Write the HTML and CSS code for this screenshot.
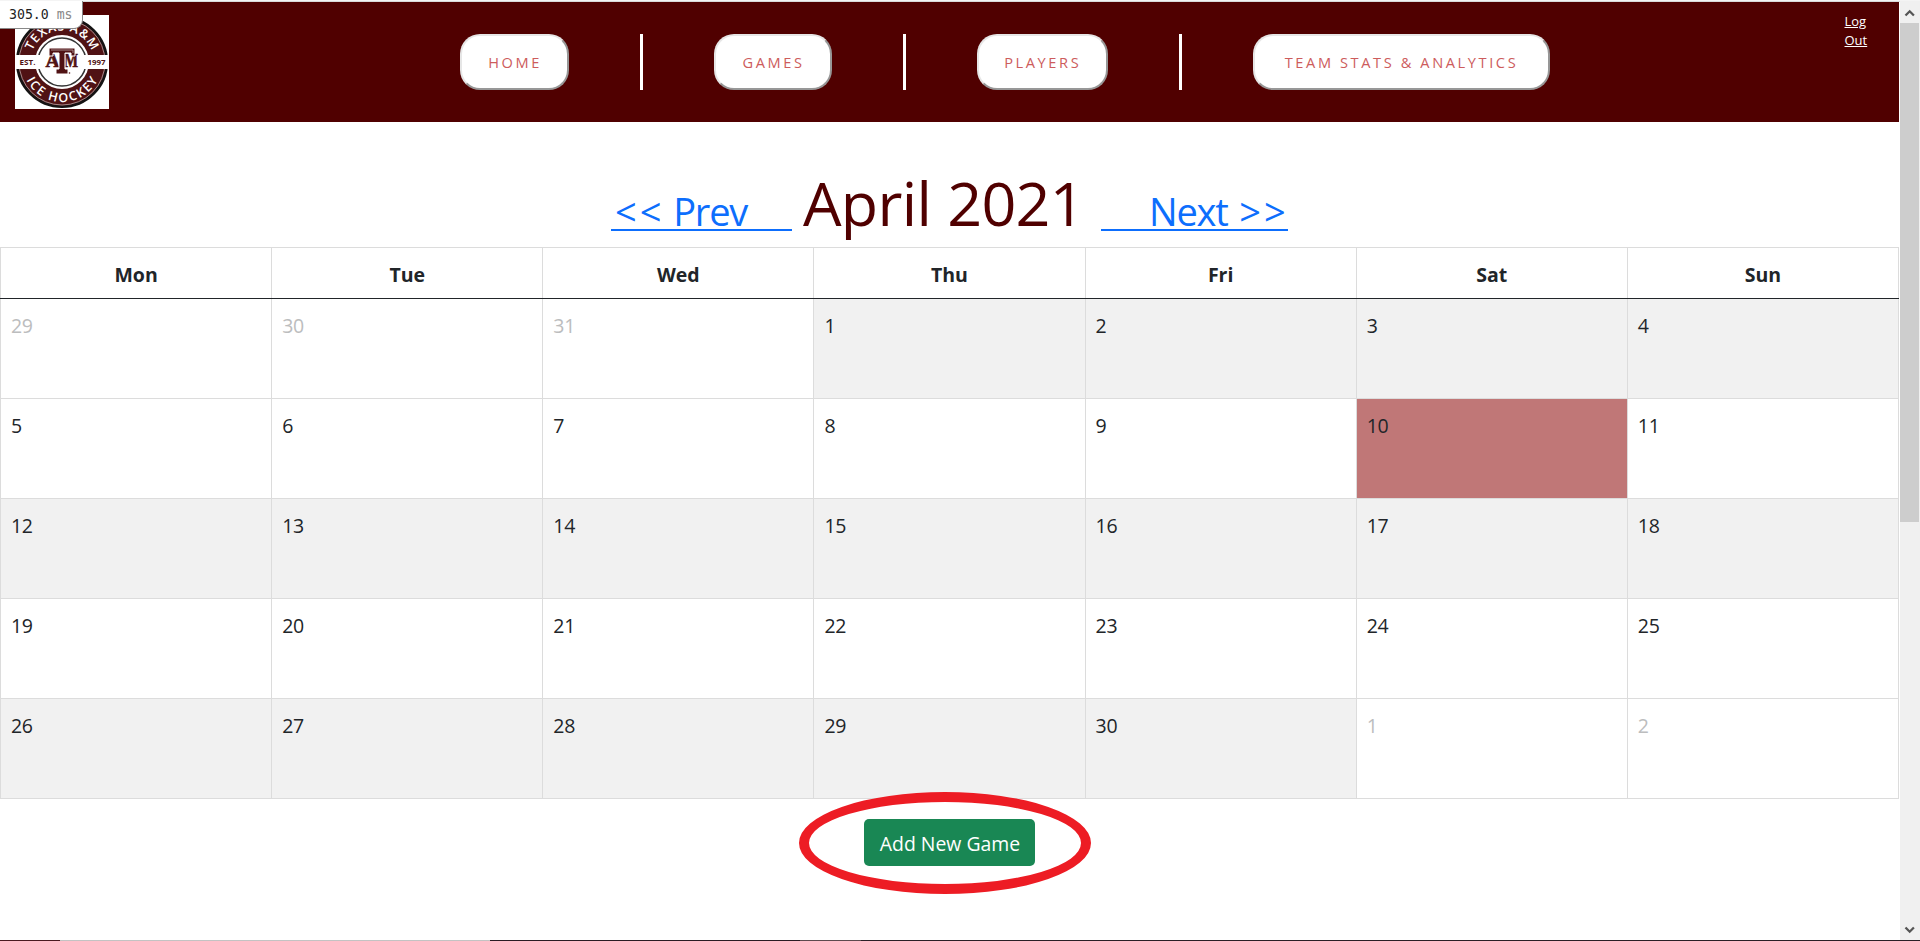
FILE: index.html
```html
<!DOCTYPE html>
<html lang="en">
<head>
<meta charset="utf-8">
<title>Games Calendar</title>
<link rel="stylesheet" href="styles.css">
</head>
<body>
<div class="window">
  <div class="page">
    <header class="navbar">
      <svg class="logo" viewBox="0 0 94 94">
        <defs>
          <path id="arc-top" d="M15.500 47a31.500 31.500 0 0 1 63 0"/>
          <path id="arc-bottom" d="M7 47a40 40 0 0 0 80 0"/>
        </defs>
        <rect width="94" height="94" fill="#fff"/>
        <circle cx="47" cy="47" r="44.8" fill="#501214" stroke="#151313" stroke-width="2.6"/>
        <circle cx="47" cy="47" r="43" fill="none" stroke="#b9a5a5" stroke-width=".8"/>
        <circle cx="47" cy="47" r="27" fill="#fff"/>
        <rect y="40" width="94" height="14" fill="#fff"/>
        <circle cx="47" cy="47" r="24" fill="#fff" stroke="#333" stroke-width="1.5"/>
        <rect x="18" y="40" width="58" height="14" fill="#fff"/>
        <text class="ring-text"><textPath href="#arc-top" startOffset="50%" text-anchor="middle" textLength="76">TEXAS A&amp;M</textPath></text>
        <text class="ring-text"><textPath href="#arc-bottom" startOffset="50%" text-anchor="middle" textLength="88">ICE HOCKEY</textPath></text>
        <text class="side-text" x="4.5" y="49.5" textLength="16" lengthAdjust="spacingAndGlyphs">EST.</text>
        <text class="side-text" x="72.5" y="49.5" textLength="18" lengthAdjust="spacingAndGlyphs">1997</text>
        <text class="mono-text" x="30.5" y="52" textLength="14" lengthAdjust="spacingAndGlyphs">A</text>
        <text class="mono-text" x="49" y="52" textLength="14" lengthAdjust="spacingAndGlyphs">M</text>
        <path d="M34 33h26v8h-4v-3h-6v16h3v5H41v-5h3V38h-6v3h-4z" fill="#501214" stroke="#fff" stroke-width="1"/>
        <path d="M36 35h22v3" fill="none" stroke="#b9a5a5" stroke-width=".8"/>
        <circle cx="54.5" cy="58" r=".8" fill="#501214"/>
      </svg>
      <nav class="menu">
        <button class="menu-btn home">HOME</button>
        <i class="divider"></i>
        <button class="menu-btn games">GAMES</button>
        <i class="divider"></i>
        <button class="menu-btn players">PLAYERS</button>
        <i class="divider"></i>
        <button class="menu-btn stats">TEAM STATS &amp; ANALYTICS</button>
      </nav>
      <a class="logout" href="#">Log<br>Out</a>
    </header>
    <div class="heading">
      <a class="prev" href="#"><span class="arrows">&lt;&lt;</span> Prev</a>
      <h1>April 2021</h1>
      <a class="next" href="#">Next <span class="arrows">&gt;&gt;</span></a>
    </div>
    <table class="calendar">
      <thead>
        <tr><th>Mon</th><th>Tue</th><th>Wed</th><th>Thu</th><th>Fri</th><th>Sat</th><th>Sun</th></tr>
      </thead>
      <tbody>
        <tr class="odd"><td class="other">29</td><td class="other">30</td><td class="other">31</td><td>1</td><td>2</td><td>3</td><td>4</td></tr>
        <tr><td>5</td><td>6</td><td>7</td><td>8</td><td>9</td><td class="today">10</td><td>11</td></tr>
        <tr class="odd"><td>12</td><td>13</td><td>14</td><td>15</td><td>16</td><td>17</td><td>18</td></tr>
        <tr><td>19</td><td>20</td><td>21</td><td>22</td><td>23</td><td>24</td><td>25</td></tr>
        <tr class="odd"><td>26</td><td>27</td><td>28</td><td>29</td><td>30</td><td class="other">1</td><td class="other">2</td></tr>
      </tbody>
    </table>
    <div class="actions">
      <button class="add-btn">Add New Game</button>
    </div>
  </div>
  <div class="scrollbar">
    <svg width="20" height="21" viewBox="0 0 20 21"><path d="M5.500 14.500l4.200-4.200 4.200 4.200" fill="none" stroke="#555" stroke-width="2.300"/></svg>
    <div class="thumb"></div>
    <svg class="down" width="20" height="21" viewBox="0 0 20 21"><path d="M5.500 8.500l4.200 4.200 4.200-4.200" fill="none" stroke="#555" stroke-width="2.300"/></svg>
  </div>
</div>
<div class="edge"><i class="e1"></i><i class="e2"></i><i class="e3"></i><i class="e4"></i><i class="e5"></i></div>
<div class="profiler">305.0 <span>ms</span></div>
<div class="marker"></div>
</body>
</html>
```

FILE: styles.css
```css
* { box-sizing: border-box; }
body {
  margin: 0;
  height: 941px;
  overflow: hidden;
  background: #fff;
  color: #212529;
  font-family: "Open Sans", "Noto Sans", sans-serif;
}
.window {
  display: flex;
  height: 940px;
  border-top: 1px solid #f4f4f4;
}
.page { width: 1900px; padding-right: 1px; border-top: 1px solid #d9d9d9; }
.navbar {
  display: flex;
  height: 120px;
  background: #500000;
  padding: 13px 0 0 15px;
}
.logo { width: 94px; height: 94px; flex: none; }
.ring-text { font: 600 12.5px "Open Sans", sans-serif; fill: #fff; }
.side-text { font: 700 6.5px "Open Sans", sans-serif; fill: #501214; }
.mono-text { font: 700 18px "Liberation Serif", serif; fill: #501214; stroke: #501214; stroke-width: .6; }
.menu { display: flex; gap: 71px; margin: 19px 0 0 351px; height: 56px; }
.menu-btn {
  height: 56px;
  padding: 0 0 0 1px;
  background: #fff;
  border: 2px solid;
  border-color: #e6e6e6 #979797 #979797 #e6e6e6;
  border-radius: 20px;
  color: #cd5c5c;
  font: 400 14.6px "Open Sans", sans-serif;
  letter-spacing: 2.600px;
  white-space: nowrap;
}
.home { width: 109px; }
.games { width: 118px; }
.players { width: 131.500px; margin-left: -.5px; }
.stats { width: 297px; margin-left: -.5px; }
.divider { width: 3px; background: #fff; }
.menu .divider, .menu-btn { flex: none; }
.logout {
  margin: -3px 0 0 295px;
  color: #fff;
  font-size: 13px;
  line-height: 19px;
}
.heading {
  display: flex;
  align-items: baseline;
  height: 125px;
  padding-left: 611px;
  white-space: pre;
}
.heading a {
  color: #0d6efd;
  font-size: 38px;
  letter-spacing: -1.200px;
  text-decoration: none;
  border-bottom: 2px solid #0d6efd;
  line-height: 36px;
}
.heading .arrows { letter-spacing: 3px; }
.prev { width: 181px; padding-left: 4px; }
.next { width: 187px; padding-left: 48px; }
.next .arrows { padding-left: 3px; }
.heading h1 {
  width: 309px;
  margin: 0;
  padding-left: 11px;
  color: #500000;
  font-weight: 400;
  font-size: 61px;
  line-height: 162px;
  letter-spacing: -.7px;
  word-spacing: 1px;
}
.calendar {
  width: 1899px;
  table-layout: fixed;
  border-collapse: collapse;
  font-size: 19.500px;
}
.calendar th {
  height: 51px;
  padding: 3px 0 0;
  border: 1px solid #dcdcdc;
  border-bottom-color: #212529;
  font-size: 19.500px;
  font-weight: 700;
}
.calendar td {
  height: 100px;
  padding: 12px 10px;
  vertical-align: top;
  border: 1px solid #dcdcdc;
  letter-spacing: -.3px;
  line-height: 30px;
}
.calendar tbody tr:first-child td { border-top-color: #212529; }
.odd td { background: #f1f1f1; }
.calendar td.other { background: #fff; color: #bcbdbe; }
.calendar td.today { background: #c07777; }
.actions { display: flex; justify-content: center; padding-top: 20px; }
.add-btn {
  width: 171px;
  height: 47px;
  padding: 2px 0 0 1px;
  border: 0;
  border-radius: 5px;
  background: #198754;
  color: #fff;
  font: 400 19.400px "Open Sans", sans-serif;
  white-space: nowrap;
}
.scrollbar {
  display: flex;
  flex-direction: column;
  width: 20px;
  background: #f0f0f0;
}
.scrollbar svg { display: block; flex: none; }
.thumb { width: 19px; height: 499px; margin-top: 1px; background: #cdcdcd; }
.scrollbar .down { margin-top: auto; }
.edge { display: flex; height: 1px; }
.e1 { width: 60px; background: #4a1a20; }
.e2 { width: 430px; background: #c3c3c3; }
.e3 { width: 310px; background: #2a1c24; }
.e4 { width: 61px; background: #5c4a4e; }
.e5 { flex: 1; background: #2a1f26; }
.profiler {
  position: absolute;
  left: 0;
  top: 1px;
  width: 83px;
  height: 28px;
  padding-left: 9px;
  border: 1px solid #888;
  border-width: 0 1px 1px 0;
  border-bottom-right-radius: 9px;
  background: #fff;
  color: #222;
  font: 13.200px/28px "DejaVu Sans Mono", monospace;
}
.profiler span { color: #888; }
.marker {
  position: absolute;
  left: 799px;
  top: 792px;
  width: 292px;
  height: 102px;
  border: 10px solid #ed1c24;
  border-radius: 50%;
}
```
